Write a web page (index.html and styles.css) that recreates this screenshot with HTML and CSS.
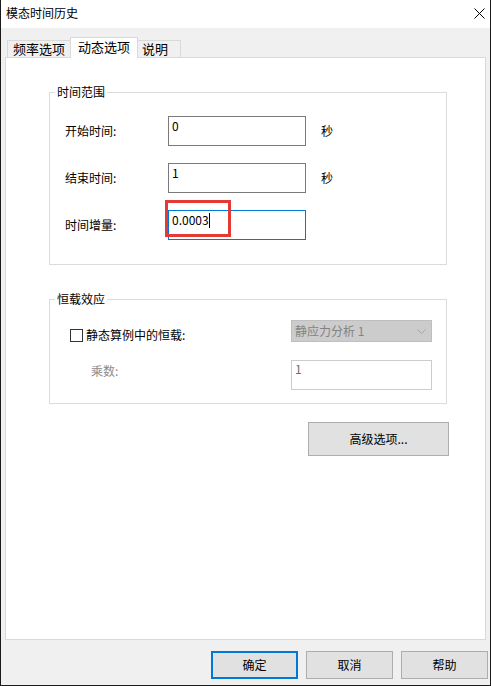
FILE: index.html
```html
<!DOCTYPE html>
<html lang="zh-CN">
<head>
    <meta charset="UTF-8">
    <title>模态时间历史</title>
    <link rel="stylesheet" href="styles.css">
</head>
<body>
    <div class="window">
        <div class="titlebar">
            <span class="title">模态时间历史</span>
            <svg class="close" width="11" height="11" viewBox="0 0 11 11">
                <path d="M0.5 0.5 L10.5 10.5 M10.5 0.5 L0.5 10.5" stroke="#000" stroke-width="1" fill="none"/>
            </svg>
        </div>
        <div class="client">
            <div class="tabs">
                <div class="tab">频率选项</div>
                <div class="tab active">动态选项</div>
                <div class="tab narrow">说明</div>
            </div>
            <div class="panel">
                <div class="group">
                    <div class="group-title">时间范围</div>
                    <div class="rows">
                        <div class="row">
                            <span class="label">开始时间:</span>
                            <div class="input">0</div>
                            <span class="unit">秒</span>
                        </div>
                        <div class="row">
                            <span class="label">结束时间:</span>
                            <div class="input">1</div>
                            <span class="unit">秒</span>
                        </div>
                        <div class="row">
                            <span class="label">时间增量:</span>
                            <div class="input focused">0.0003<span class="caret"></span><span class="mark"></span></div>
                        </div>
                    </div>
                </div>

                <div class="group group-load">
                    <div class="group-title">恒载效应</div>
                    <div class="load-rows">
                        <div class="load-row">
                            <label class="check"><span class="box"></span>静态算例中的恒载:</label>
                            <div class="select">
                                <span>静应力分析 1</span>
                                <svg width="9" height="5" viewBox="0 0 9 5">
                                    <path d="M0.5 0.5 L4.5 4.5 L8.5 0.5" stroke="#a6a6a6" stroke-width="1" fill="none"/>
                                </svg>
                            </div>
                        </div>
                        <div class="load-row second">
                            <span class="label-disabled">乘数:</span>
                            <div class="input disabled">1</div>
                        </div>
                    </div>
                </div>

                <button class="btn advanced">高级选项...</button>
            </div>
            <div class="footer">
                <button class="btn default">确定</button>
                <button class="btn">取消</button>
                <button class="btn">帮助</button>
            </div>
        </div>
    </div>
</body>
</html>
```

FILE: styles.css
```css
body {
    margin: 0;
    font-family: "Noto Sans CJK SC", "Liberation Sans", sans-serif;
    font-size: 12px;
    line-height: 16px;
    color: #000;
}
.window {
    width: 491px;
    height: 686px;
    box-sizing: border-box;
    border: 1px solid #1a1a1a;
    border-top: none;
    background: #f0f0f0;
    display: flex;
    flex-direction: column;
}
.titlebar {
    height: 28px;
    flex: none;
    background: #fff;
    display: flex;
    justify-content: space-between;
    align-items: flex-start;
    padding: 5px 5px 0 5px;
    box-sizing: border-box;
}
.close {
    margin-top: 3px;
}
.client {
    flex: 1;
    padding: 9px 0 0 4px;
    display: flex;
    flex-direction: column;
}
.tabs {
    display: flex;
    align-items: flex-end;
    padding-left: 2px;
    height: 20px;
}
.tab {
    height: 17px;
    box-sizing: border-box;
    border: 1px solid #d9d9d9;
    border-bottom: none;
    padding: 0 5px;
    font-size: 13px;
    line-height: 15px;
    background: #f0f0f0;
    margin-left: -1px;
}
.tab:first-child {
    margin-left: 0;
}
.tab.active {
    height: 21px;
    margin-bottom: -1px;
    padding: 0 7px;
    line-height: 18px;
    background: #fff;
    position: relative;
    z-index: 1;
}
.tab.narrow {
    width: 44px;
    padding: 0 4px;
}
.panel {
    height: 583px;
    width: 481px;
    box-sizing: border-box;
    border: 1px solid #d9d9d9;
    background: #fff;
    display: flex;
    flex-direction: column;
}
.group {
    margin: 34px 38px 0 43px;
    border: 1px solid #dcdcdc;
}
.group-title {
    width: max-content;
    margin: -9px 0 0 5px;
    padding: 0 2px;
    background: #fff;
}
.rows {
    padding: 16px 0 24px 15px;
    display: flex;
    flex-direction: column;
    gap: 17px;
}
.row {
    display: flex;
    align-items: center;
}
.label {
    width: 103px;
}
.input {
    width: 138px;
    height: 30px;
    box-sizing: border-box;
    border: 1px solid #7a7a7a;
    padding: 1px 3px;
    background: #fff;
    position: relative;
}
.input.focused {
    border-color: #0078d7;
}
.input.disabled {
    width: 141px;
    border-color: #cccccc;
    color: #6d6d6d;
    padding-top: 0;
}
.caret {
    display: inline-block;
    width: 1px;
    height: 15px;
    background: #000;
    vertical-align: -3px;
}
.mark {
    position: absolute;
    left: -4px;
    top: -11px;
    width: 66px;
    height: 37px;
    box-sizing: border-box;
    border: 3px solid #e53935;
}
.unit {
    margin-left: 15px;
}
.load-rows {
    padding: 13px 14px 13px 20px;
}
.load-row {
    display: flex;
    align-items: flex-start;
    justify-content: space-between;
}
.load-row.second {
    margin-top: 17px;
    padding-left: 21px;
}
.check {
    display: flex;
    align-items: center;
    gap: 3px;
    margin-top: 7px;
}
.box {
    width: 13px;
    height: 13px;
    box-sizing: border-box;
    border: 1px solid #333;
    background: #fff;
}
.label-disabled {
    color: #8a8a8a;
    margin-top: 3px;
}
.select {
    width: 141px;
    height: 22px;
    box-sizing: border-box;
    border: 1px solid #bfbfbf;
    background: #cccccc;
    color: #838383;
    padding: 0 5px 0 3px;
    line-height: 20px;
    display: flex;
    justify-content: space-between;
    align-items: center;
}
.btn {
    font-family: inherit;
    font-size: 12px;
    line-height: 16px;
    color: #000;
    background: #e1e1e1;
    border: 1px solid #adadad;
    padding: 0;
    width: 87px;
    height: 28px;
}
.btn.default {
    border: 2px solid #0078d7;
}
.advanced {
    width: 141px;
    height: 34px;
    align-self: flex-end;
    margin: 18px 36px 0 0;
}
.footer {
    display: flex;
    justify-content: flex-end;
    gap: 8px;
    margin-top: 11px;
    padding-right: 2px;
}
```
